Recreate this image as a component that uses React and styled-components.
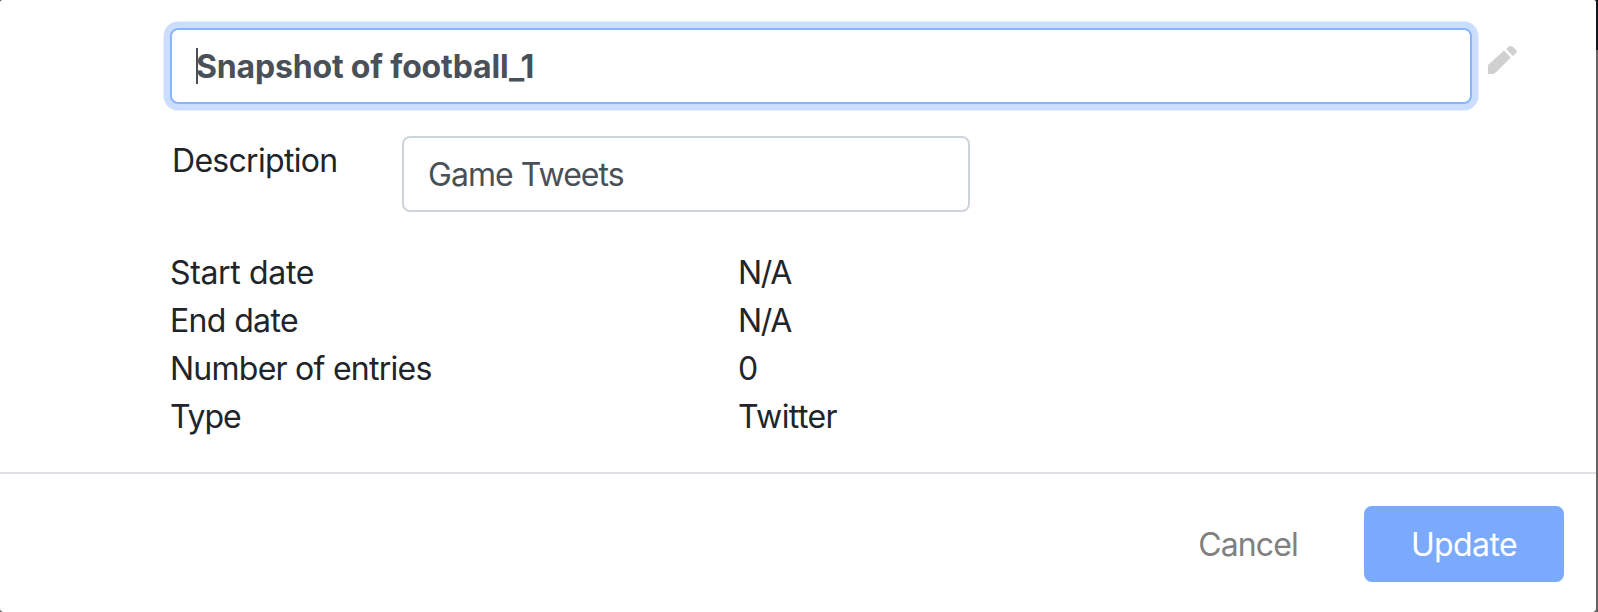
import React from 'react';
import styled, { createGlobalStyle } from 'styled-components';

const GlobalStyle = createGlobalStyle`
  *, *::before, *::after { box-sizing: border-box; }
  html, body { margin: 0; }
  body { overflow: hidden; background: #636363; }
`;

const Backdrop = styled.div`
  width: 1598px;
  height: 612px;
  overflow: hidden;
  background: linear-gradient(#12141c 50px, #636363 50px);
  font-family: Inter, 'Liberation Sans', sans-serif;
  font-size: 32px;
  line-height: 48px;
  color: #212529;
`;

const Dialog = styled.div`
  width: 1596px;
  height: 612px;
  background: #fff;
  border-radius: 2px 2px 4px 4px;
  display: flex;
  flex-direction: column;
`;

const Body = styled.div`
  height: 472px;
  padding: 28px 0 0 170px;
`;

const TitleRow = styled.div`
  display: flex;
  align-items: flex-start;
  gap: 16px;
`;

const Field = styled.div`
  position: relative;
  width: ${(p) => p.$width}px;
  height: 76px;
  padding: 13px 24px 11px;
  border: 2px solid ${(p) => (p.$focused ? '#86b7fe' : '#ced4da')};
  border-radius: 8px;
  box-shadow: ${(p) => (p.$focused ? '0 0 0 6.4px #cbdeff' : 'none')};
  background: #fff;
  color: #495057;
  font-weight: ${(p) => (p.$focused ? 700 : 400)};
`;

const Caret = styled.span`
  position: absolute;
  left: 24px;
  top: 18px;
  width: 2px;
  height: 36px;
  background: #495057;
`;

const Text = styled.span`
  white-space: nowrap;
  letter-spacing: ${(p) => p.$track || 0}px;
`;

const Pencil = styled.svg`
  width: 29px;
  height: 28px;
  margin-top: 18px;
  fill: #d0d0d0;
`;

const DescriptionRow = styled.div`
  display: flex;
  margin-top: 32px;
`;

const DescriptionLabel = styled.div`
  width: 232px;
  padding: 1px 0 0 2px;
`;

const Details = styled.dl`
  display: grid;
  grid-template-columns: 568px 1fr;
  margin: 37px 0 0;
`;

const Term = styled.dt``;

const Value = styled.dd`
  margin: 0;
`;

const Footer = styled.div`
  flex: 1;
  display: flex;
  justify-content: flex-end;
  align-items: flex-start;
  gap: 16px;
  padding: 32px 32px 0;
  border-top: 2px solid #dee2e6;
`;

const Button = styled.button`
  width: ${(p) => p.$width}px;
  height: 76px;
  padding: 2px 0 0;
  border: 0;
  border-radius: 8px;
  font: inherit;
  background: ${(p) => (p.$primary ? '#7ba9fb' : 'transparent')};
  color: ${(p) => (p.$primary ? '#fff' : '#808080')};
`;

const details = [
  { term: 'Start date', termTrack: -0.35, value: 'N/A', valueTrack: -1.3 },
  { term: 'End date', termTrack: -0.65, value: 'N/A', valueTrack: -1.3 },
  { term: 'Number of entries', termTrack: -0.75, value: '0', valueTrack: 0 },
  { term: 'Type', termTrack: -1.1, value: 'Twitter', valueTrack: -0.6 },
];

export default function App() {
  return (
    <Backdrop>
      <GlobalStyle />
      <Dialog>
        <Body>
          <TitleRow>
            <Field $width={1302} $focused>
              <Caret />
              <Text $track={-0.17}>Snapshot of football_1</Text>
            </Field>
            <Pencil viewBox="0 0 29 28">
              <path d="M0 19L16 4.6l6.8 6.8L8.8 25.6Q6.5 28 5 28H0z" />
              <path d="M18.2 2.9L20.6.7Q21.4 0 22.6 0 24 0 25 .9l3 3.1q1.3 1.5.3 3L24.8 10z" />
            </Pencil>
          </TitleRow>
          <DescriptionRow>
            <DescriptionLabel>
              <Text $track={-0.7}>Description</Text>
            </DescriptionLabel>
            <Field $width={568}>
              <Text $track={-0.95}>Game Tweets</Text>
            </Field>
          </DescriptionRow>
          <Details>
            {details.map((row) => (
              <React.Fragment key={row.term}>
                <Term><Text $track={row.termTrack}>{row.term}</Text></Term>
                <Value><Text $track={row.valueTrack}>{row.value}</Text></Value>
              </React.Fragment>
            ))}
          </Details>
        </Body>
        <Footer>
          <Button $width={200}><Text $track={-0.9}>Cancel</Text></Button>
          <Button $width={200} $primary><Text $track={-0.6}>Update</Text></Button>
        </Footer>
      </Dialog>
    </Backdrop>
  );
}
